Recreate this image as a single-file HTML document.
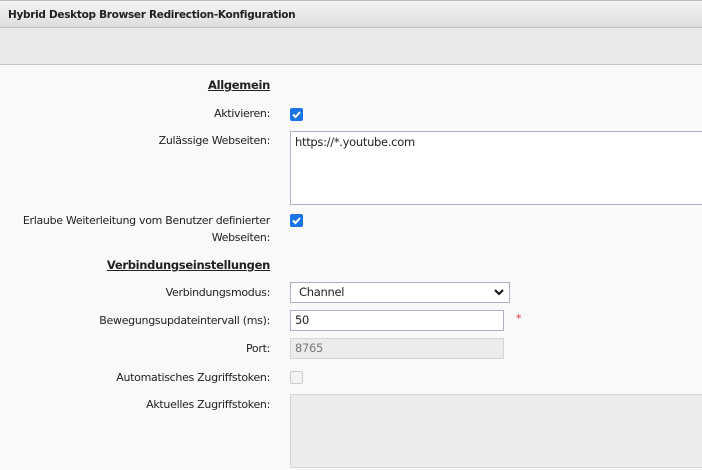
<!DOCTYPE html>
<html><head><style>
*{box-sizing:border-box;margin:0;padding:0}
body{width:702px;height:470px;overflow:hidden;background:#f9f9f9;font-family:"DejaVu Sans","Liberation Sans",sans-serif;font-size:11px;color:#222;position:relative}
.hdr{position:absolute;left:0;top:0;width:702px;height:28px;border-top:1px solid #bbb;border-bottom:1px solid #c4c4c4;background:linear-gradient(#f4f4f4,#dedede)}
.hdr span{position:absolute;left:8px;top:8px;font-weight:bold;font-size:10.5px;color:#222;letter-spacing:-0.3px}
.tb{position:absolute;left:0;top:28px;width:702px;height:37px;background:#e9e9e9;border-bottom:1px solid #c8c8c8}
.l{position:absolute;right:432px;text-align:right;white-space:nowrap;letter-spacing:-0.3px}
.h{font-weight:bold;text-decoration:underline;font-size:11.5px}
.cb{position:absolute;left:290px;width:13px;height:13px;border-radius:2px;background:#1a73e8}
.cb svg{position:absolute;left:1px;top:1px}
.in{position:absolute;left:290px;background:#fff;border:1px solid #aab0c6;padding:3px 4px;letter-spacing:-0.3px;font-size:11.5px}
.dis{background:#ececec;border-color:#d6d6d6;color:#777}
</style></head><body>
<div class="hdr"><span>Hybrid Desktop Browser Redirection-Konfiguration</span></div>
<div class="tb"></div>
<div class="l h" style="top:78px">Allgemein</div>
<div class="l" style="top:107px">Aktivieren:</div>
<div class="cb" style="top:108px"><svg width="11" height="11"><path d="M2 5.5l2.5 2.5 4.5-5" stroke="#fff" stroke-width="2" fill="none"/></svg></div>
<div class="l" style="top:134px">Zulässige Webseiten:</div>
<div class="in" style="top:131px;width:420px;height:74px">https://*.youtube.com</div>
<div class="l" style="top:212px;line-height:17px">Erlaube Weiterleitung vom Benutzer definierter<br>Webseiten:</div>
<div class="cb" style="top:214px"><svg width="11" height="11"><path d="M2 5.5l2.5 2.5 4.5-5" stroke="#fff" stroke-width="2" fill="none"/></svg></div>
<div class="l h" style="top:258px">Verbindungseinstellungen</div>
<div class="l" style="top:286px">Verbindungsmodus:</div>
<div class="in" style="top:282px;width:220px;height:21px;padding:2px 8px">Channel<svg style="position:absolute;right:5px;top:6px" width="10" height="7"><path d="M1 1l4 4 4-4" stroke="#111" stroke-width="2" fill="none"/></svg></div>
<div class="l" style="top:314px">Bewegungsupdateintervall (ms):</div>
<div class="in" style="top:310px;width:214px;height:21px;padding:2px 4px">50</div>
<div style="position:absolute;left:516px;top:312px;color:#d33;font-size:11px">*</div>
<div class="l" style="top:342px">Port:</div>
<div class="in dis" style="top:338px;width:214px;height:21px;padding:2px 4px">8765</div>
<div class="l" style="top:371px">Automatisches Zugriffstoken:</div>
<div style="position:absolute;left:290px;top:371px;width:13px;height:13px;border:1px solid #ccc;border-radius:2px;background:#f3f3f3"></div>
<div class="l" style="top:398px">Aktuelles Zugriffstoken:</div>
<div class="in dis" style="top:394px;width:420px;height:74px"></div>
</body></html>
